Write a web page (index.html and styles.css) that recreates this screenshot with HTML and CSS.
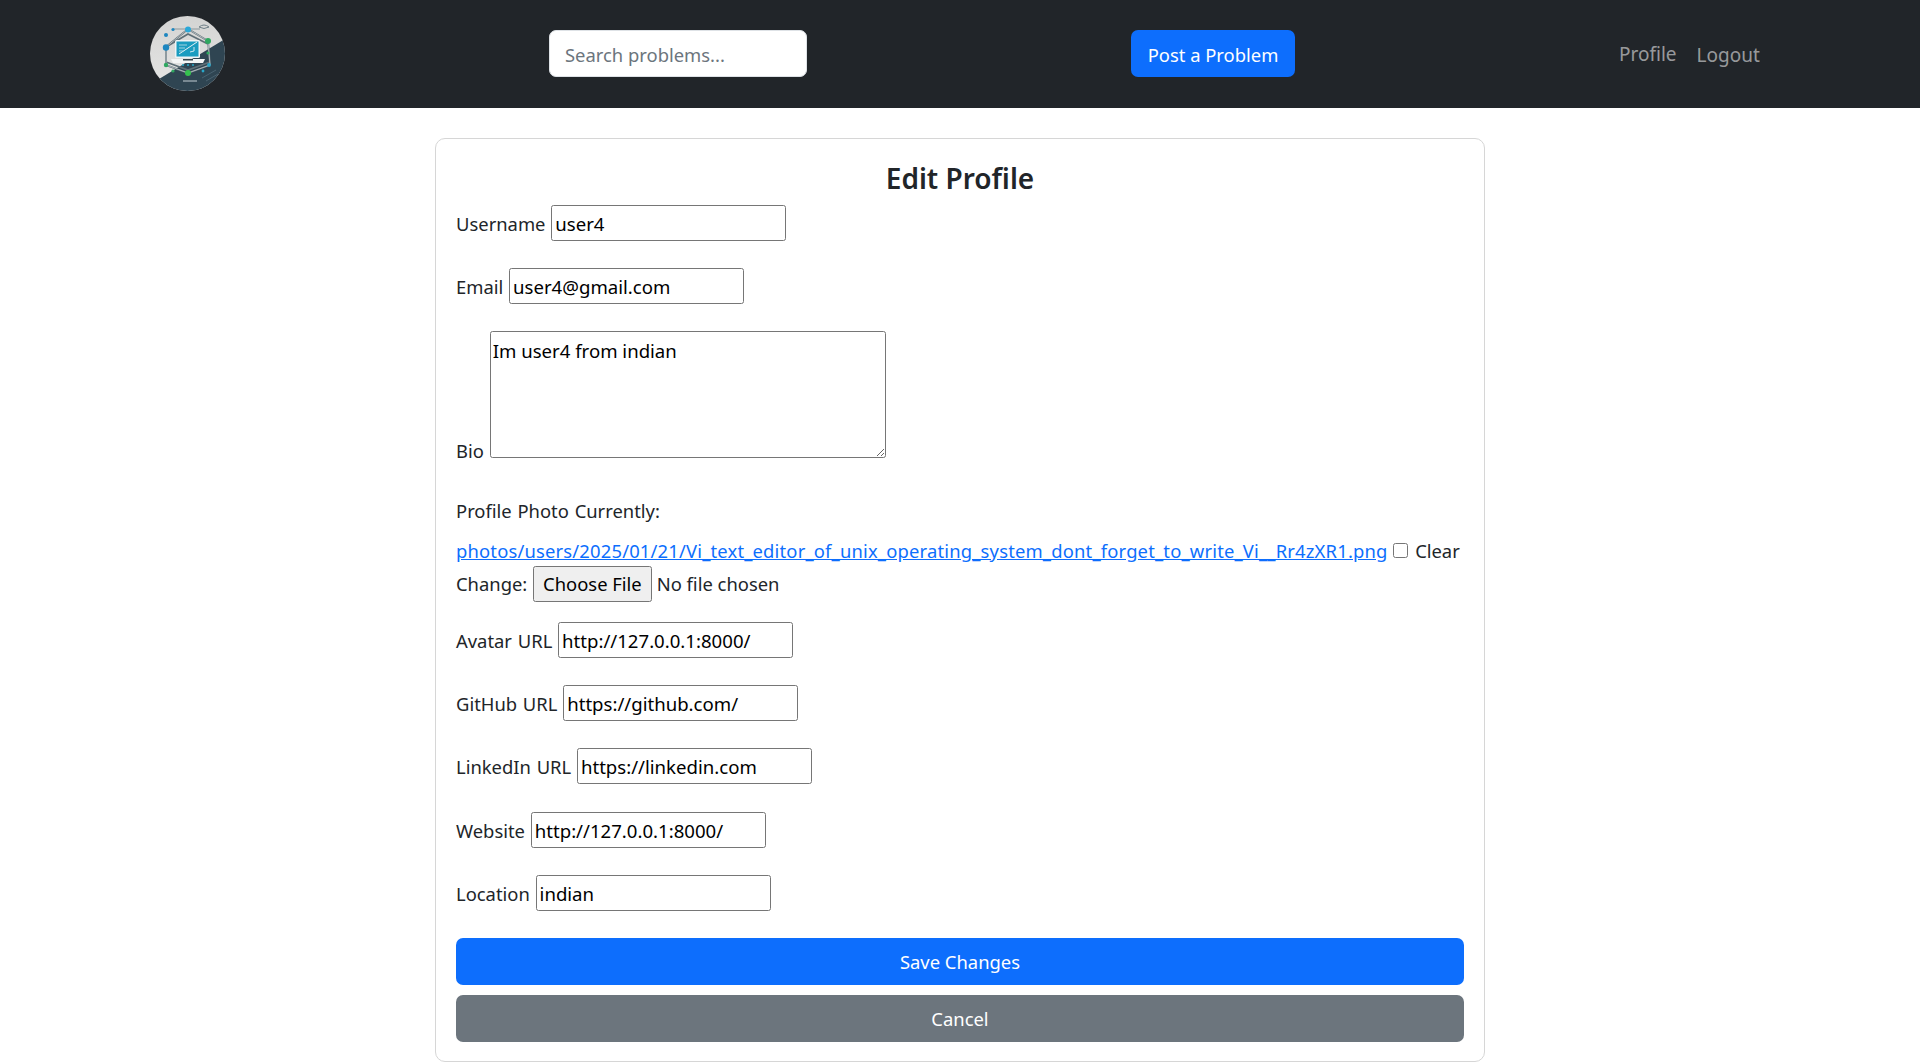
FILE: index.html
```html
<!DOCTYPE html>
<html lang="en">
<head>
  <meta charset="UTF-8" />
  <title>Edit Profile</title>
  <meta name="viewport" content="width=device-width, initial-scale=1.0"/>
  <link rel="stylesheet" href="styles.css">
</head>
<body>

<nav class="navbar">
  <a class="logo" href="#">
    <svg viewBox="0 0 75 75" width="75" height="75">
      <defs>
        <clipPath id="disc"><circle cx="37.5" cy="37.5" r="37.5"/></clipPath>
        <linearGradient id="paper" x1="0" y1="0" x2="0" y2="1">
          <stop offset="0" stop-color="#d4d4d3"/>
          <stop offset="1" stop-color="#e6e6e5"/>
        </linearGradient>
      </defs>
      <g clip-path="url(#disc)">
        <rect width="75" height="75" fill="url(#paper)"/>
        <path d="M75 23 L9 63 L20 75 L75 75 Z" fill="#2f4552"/>
        <path d="M33 65 h14" stroke="#c3ced3" stroke-width="1"/>
        <path d="M52 62 L66 54 M56 65 L68 58" stroke="#4a6270" stroke-width="1"/>
      </g>
      <path d="M38 13 L58 25 L60 49 L38 57 L16 49 L16 31 Z M16 31 L38 18 L58 28 M16 46 L38 54 L60 46" fill="none" stroke="#5f6f77" stroke-width="1.8"/>
      <path d="M38 13 L58 25 L60 49 L38 57 L16 49 L16 31 Z" fill="none" stroke="#e3e8ea" stroke-width=".6"/>
      <path d="M23 13 H38 L50 13" fill="none" stroke="#8b979c" stroke-width="1"/>
      <path d="M49 11 q5 -4 10 0 q-5 3 -10 0" fill="none" stroke="#6f8088" stroke-width="1"/>
      <rect x="25" y="24" width="25" height="18" rx="1.5" fill="#eef3f5"/>
      <rect x="26.5" y="25.5" width="22" height="15" fill="#1a9cc0"/>
      <path d="M29 38 L47 26" stroke="#e6f2f5" stroke-width="1"/>
      <path d="M29 29 h8 M29 32 h6 M29 35 h5" stroke="#9fd2e0" stroke-width="1"/>
      <path d="M40 36 l4 -1 l0 -4" fill="none" stroke="#cfe8ef" stroke-width="1"/>
      <path d="M21 43 H55 L53 47 H23 Z" fill="#f4f5f5"/>
      <rect x="33" y="43" width="10" height="1.5" fill="#33434b"/>
      <g fill="#1d86c0">
        <circle cx="38" cy="13.5" r="3" fill="#2ba8d8"/>
        <circle cx="16" cy="31.5" r="3.2"/>
        <circle cx="16" cy="19" r="2"/>
        <circle cx="23" cy="13.5" r="1.6"/>
      </g>
      <g fill="#2fa860">
        <circle cx="58" cy="25" r="3"/>
        <circle cx="16" cy="49" r="2.2"/>
        <circle cx="23" cy="55" r="1.6"/>
        <circle cx="38" cy="57" r="3" fill="#35c24f"/>
        <circle cx="58" cy="37" r="1.6"/>
      </g>
      <g fill="#29a7c9">
        <circle cx="59" cy="49" r="1.9"/>
        <circle cx="53" cy="55" r="1.4"/>
        <circle cx="33" cy="49" r="1"/>
        <circle cx="38" cy="49" r="1"/>
        <circle cx="43" cy="49" r="1"/>
      </g>
    </svg>
  </a>
  <input class="search" type="text" placeholder="Search problems...">
  <a class="btn btn-post" href="#">Post a Problem</a>
  <div class="nav-links">
    <a class="nav-profile" href="#">Profile</a>
    <a class="nav-logout" href="#">Logout</a>
  </div>
</nav>

<main class="card">
  <h1>Edit Profile</h1>
  <form>
    <p><label>Username</label> <input type="text" value="user4"></p>
    <p><label>Email</label> <input type="text" value="user4@gmail.com"></p>
    <p class="bio"><label>Bio</label> <textarea>Im user4 from indian</textarea></p>
    <p class="photo">
      <label>Profile Photo</label> Currently:<br>
      <span class="current"><a href="#">photos/users/2025/01/21/Vi_text_editor_of_unix_operating_system_dont_forget_to_write_Vi__Rr4zXR1.png</a>
      <input type="checkbox"> <label>Clear</label></span><br>
      Change: <input type="file">
    </p>
    <p><label>Avatar URL</label> <input type="text" value="http://127.0.0.1:8000/"></p>
    <p><label>GitHub URL</label> <input type="text" value="https://github.com/"></p>
    <p><label>LinkedIn URL</label> <input type="text" value="https://linkedin.com"></p>
    <p><label>Website</label> <input type="text" value="http://127.0.0.1:8000/"></p>
    <p><label>Location</label> <input type="text" value="indian"></p>
    <button class="btn btn-save" type="button">Save Changes</button>
    <a class="btn btn-cancel" href="#">Cancel</a>
  </form>
</main>

</body>
</html>
```

FILE: styles.css
```css
body { margin: 0; font-family: "Noto Sans", Arial, sans-serif; font-size: 18.4px; line-height: 30px; color: #212529; background: #fff; }
a { color: #0d6efd; }

.navbar { display: flex; align-items: center; height: 108px; padding-left: 150px; background: #212529; }
.logo { display: block; width: 75px; height: 75px; margin-top: -1px; }
.logo svg { display: block; }
.navbar .search { box-sizing: border-box; width: 258px; height: 47px; margin: -1px 0 0 324px; padding: 2px 15px 0; border: 1px solid #dee2e6; border-radius: 7px; font: inherit; background: #fff; }
.search::placeholder { color: #6c757d; opacity: 1; }
.btn { display: block; box-sizing: border-box; height: 47px; border: 0; border-radius: 7px; font: inherit; line-height: 47px; text-align: center; text-decoration: none; color: #fff; }
.btn-post { width: 164px; margin: -1px 0 0 324px; line-height: 49px; background: #0d6efd; }
.nav-links { display: flex; gap: 20px; margin: 1px 0 0 324px; font-size: 19px; }
.nav-links a { color: rgba(255, 255, 255, .55); text-decoration: none; }
.nav-profile { position: relative; top: -1px; }

.card { box-sizing: border-box; width: 1050px; margin: 30px auto 0; padding: 21px 20px 19px; border: 1.5px solid #d6d6d6; border-radius: 10px; }
h1 { margin: 0 0 9px; font-size: 28px; line-height: 36px; font-weight: 600; text-align: center; }

form { word-spacing: 1px; }
form p { margin: 0 0 27px; }
form p.bio { margin-bottom: 30px; }
form p.photo { margin-bottom: 20px; }
form p:nth-of-type(7) { margin-bottom: 28px; }
input[type=text], textarea { box-sizing: border-box; width: 235px; height: 36px; padding: 1px 3px; border: 1px solid #767676; border-radius: 2.5px; font: inherit; font-size: 18.6px; word-spacing: 0; color: #000; background: #fff; }
textarea { width: 396px; height: 127px; padding: 4px 2px 2px; line-height: 30px; word-spacing: 0; }
.current { display: inline-block; margin: 10px 0 -6px; white-space: nowrap; word-spacing: 0; }
.current a { letter-spacing: .18px; }
input[type=checkbox] { width: 15px; height: 15px; margin: 0 2px 0 1px; }
input[type=file] { font: inherit; }
input[type=file]::file-selector-button { height: 36px; margin-right: 5px; padding: 0 9px; border: 1px solid #767676; border-radius: 2.5px; font: inherit; color: #000; background: #efefef; }

.btn-save { width: 100%; margin-top: 20px; line-height: 46px; background: #0d6efd; }
.btn-cancel { margin-top: 10px; background: #6c757d; }
```
